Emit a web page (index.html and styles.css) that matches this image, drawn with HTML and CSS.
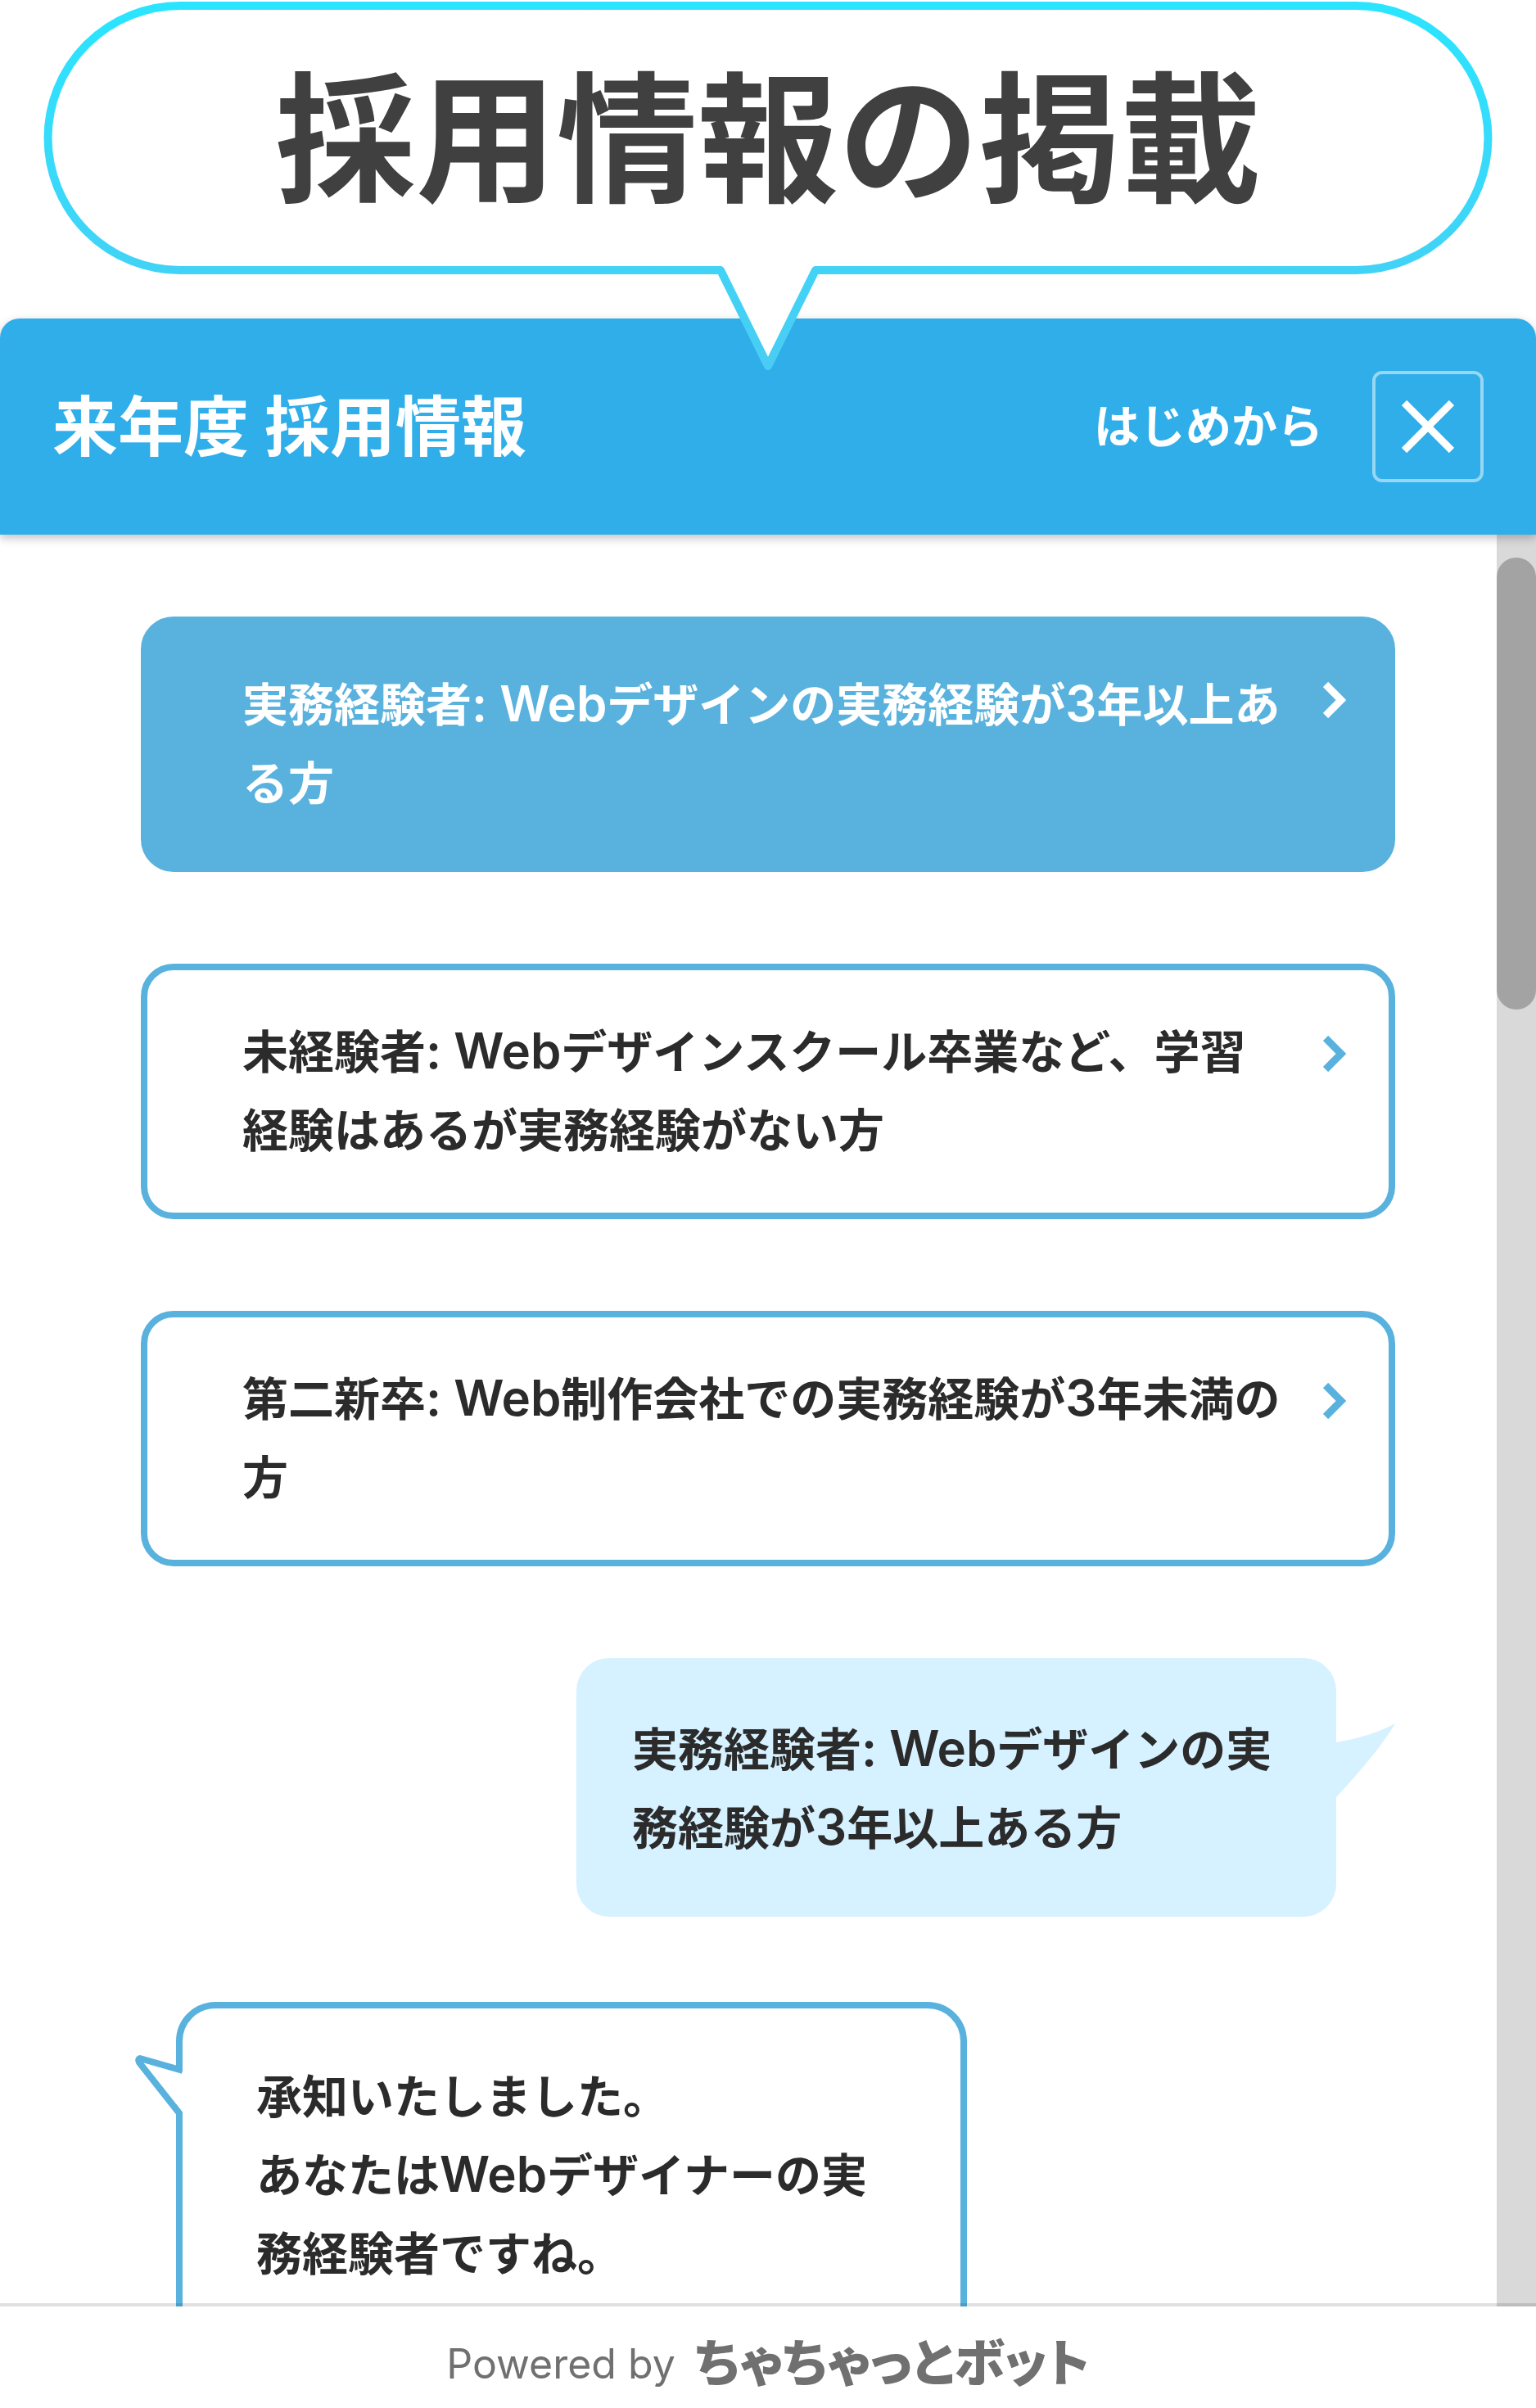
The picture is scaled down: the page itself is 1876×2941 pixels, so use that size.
FILE: index.html
```html
<!DOCTYPE html>
<html lang="ja">
<head>
<meta charset="utf-8">
<meta name="viewport" content="width=device-width, initial-scale=1">
<title>来年度 採用情報</title>
<link rel="stylesheet" href="styles.css">
</head>
<body>
<div class="page">
  <div class="callout">
    <svg class="callout-shape" viewBox="0 0 1876 456" aria-hidden="true">
      <defs>
        <linearGradient id="callout-stroke" gradientUnits="userSpaceOnUse" x1="0" y1="0" x2="0" y2="456">
          <stop offset="0" stop-color="#2ae5ff"/>
          <stop offset="1" stop-color="#4accf3"/>
        </linearGradient>
      </defs>
      <path d="M220 7H1656A161.500 161.500 0 0 1 1656 330H996L938 447L880 330H220A161.500 161.500 0 0 1 220 7Z" fill="#fff" stroke="url(#callout-stroke)" stroke-width="10" stroke-linejoin="round"/>
    </svg>
    <h1 class="callout-title">採用情報の掲載</h1>
  </div>

  <section class="chat">
    <header class="chat-header">
      <h2 class="chat-title">来年度 採用情報</h2>
      <button class="restart" type="button">はじめから</button>
      <button class="close" type="button" aria-label="閉じる">
        <svg viewBox="0 0 64 64" aria-hidden="true"><path d="M3 3L61 61M61 3L3 61"/></svg>
      </button>
    </header>

    <div class="chat-body">
      <div class="messages">
        <button class="choice choice-active" type="button">
          <span class="choice-text">実務経験者<span class="latin">: Web</span>デザインの実務経験が<span class="latin">3</span>年以上ある方</span>
          <svg class="chevron" viewBox="0 0 28 44" aria-hidden="true"><path d="M3 3L22 22L3 41"/></svg>
        </button>
        <button class="choice" type="button">
          <span class="choice-text">未経験者<span class="latin">: Web</span>デザインスクール卒業など、学習経験はあるが実務経験がない方</span>
          <svg class="chevron" viewBox="0 0 28 44" aria-hidden="true"><path d="M3 3L22 22L3 41"/></svg>
        </button>
        <button class="choice" type="button">
          <span class="choice-text">第二新卒<span class="latin">: Web</span>制作会社での実務経験が<span class="latin">3</span>年未満の方</span>
          <svg class="chevron" viewBox="0 0 28 44" aria-hidden="true"><path d="M3 3L22 22L3 41"/></svg>
        </button>

        <div class="bubble bubble-user">
          <p>実務経験者<span class="latin">: Web</span>デザインの実務経験が<span class="latin">3</span>年以上ある方</p>
          <svg class="tail tail-user" viewBox="0 0 72 90" aria-hidden="true"><path d="M0 23Q42 16 72 0Q52 34 0 90Z"/></svg>
        </div>

        <div class="bubble bubble-bot">
          <p>承知いたしました。<br>あなたは<span class="latin">Web</span>デザイナーの実務経験者ですね。</p>
          <svg class="tail tail-bot" viewBox="0 0 58 76" aria-hidden="true">
            <path class="tail-fill" d="M58 18L7 5L58 71Z"/>
            <path class="tail-line" d="M58 20L6 5Q3 6 5 10L54 72V76"/>
          </svg>
        </div>
      </div>
      <div class="scrollbar" aria-hidden="true"><div class="thumb"></div></div>
    </div>

    <footer class="chat-footer">
      <span class="powered">Powered by</span>
      <a class="brand" href="#">ちゃちゃっとボット</a>
    </footer>
  </section>
</div>
</body>
</html>
```

FILE: styles.css
```css
* {
  box-sizing: border-box;
}

body {
  margin: 0;
  background: #fff;
  color: #2b2b2b;
  font-family: Inter, "Noto Sans CJK JP", sans-serif;
  font-size: 56px;
  font-weight: 700;
  line-height: 96px;
}

h1,
h2,
p {
  margin: 0;
}

button {
  font: inherit;
  color: inherit;
  cursor: pointer;
}

.page {
  display: flex;
  flex-direction: column;
  height: 100vh;
}

/* Speech balloon above the chat window */
.callout {
  position: relative;
  z-index: 2;
  display: grid;
  flex: none;
  margin-bottom: -67px;
}

.callout-shape {
  grid-area: 1 / 1;
  display: block;
  width: 100%;
  height: auto;
}

.callout-title {
  grid-area: 1 / 1;
  color: #404040;
  font-size: 172px;
  font-weight: 700;
  line-height: 340px;
  text-align: center;
}

/* Chat window */
.chat {
  display: flex;
  flex: 1;
  flex-direction: column;
  min-height: 0;
}

.chat-header {
  position: relative;
  z-index: 1;
  display: flex;
  flex: none;
  align-items: center;
  gap: 60px;
  padding: 64px;
  border-radius: 24px 24px 0 0;
  background: #2faee9;
  box-shadow: 0 4px 12px rgba(0, 0, 0, 0.25);
  color: #fff;
}

.chat-title {
  flex: 1;
  font-size: 80px;
  font-weight: 700;
  line-height: 100px;
}

.restart {
  padding: 0;
  border: 0;
  background: none;
}

.close {
  display: grid;
  place-items: center;
  width: 136px;
  height: 136px;
  padding: 0;
  border: 4px solid rgba(255, 255, 255, 0.5);
  border-radius: 12px;
  background: none;
}

.close svg {
  width: 64px;
  height: 64px;
  fill: none;
  stroke: #fff;
  stroke-width: 9;
}

.chat-body {
  display: flex;
  flex: 1;
  min-height: 0;
  overflow: hidden;
}

.messages {
  display: flex;
  flex: 1;
  flex-direction: column;
  padding: 100px 124px 0 172px;
}

.latin {
  font-size: 60px;
  font-weight: 600;
  line-height: 1;
}

.choice {
  display: flex;
  flex: none;
  align-items: flex-start;
  justify-content: space-between;
  margin-bottom: 112px;
  padding: 52px 52px 52px 116px;
  border: 8px solid #59b2dd;
  border-radius: 40px;
  background: #fff;
  text-align: left;
}

.choice-text {
  flex: 1;
  margin-right: 44px;
}

.chevron {
  flex: none;
  width: 28px;
  height: 44px;
  margin-top: 28px;
  fill: none;
  stroke: #59b2dd;
  stroke-width: 9;
}

.choice-active {
  background: #59b2dd;
  color: #fff;
}

.choice-active .chevron {
  margin-top: 20px;
  stroke: #fff;
}

.bubble {
  position: relative;
  flex: none;
}

.bubble-user {
  align-self: flex-end;
  width: 928px;
  margin: 0 72px 104px 0;
  padding: 64px 68px 60px;
  border-radius: 40px;
  background: #d6f1ff;
}

.bubble-bot {
  align-self: flex-start;
  width: 966px;
  margin-left: 43px;
  padding: 60px 90px;
  border: 8px solid #59b2dd;
  border-radius: 48px;
}

.tail {
  position: absolute;
}

.tail-user {
  top: 80px;
  left: 100%;
  width: 72px;
  height: 90px;
  fill: #d6f1ff;
}

.tail-bot {
  top: 56px;
  left: -58px;
  width: 58px;
  height: 76px;
}

.tail-fill {
  fill: #fff;
}

.tail-line {
  fill: none;
  stroke: #59b2dd;
  stroke-width: 8;
  stroke-linejoin: round;
}

.scrollbar {
  flex: none;
  width: 48px;
  padding-top: 28px;
  background: #d9d9d9;
}

.thumb {
  height: 552px;
  border-radius: 24px;
  background: #a3a3a3;
}

.chat-footer {
  position: relative;
  display: flex;
  flex: none;
  align-items: center;
  justify-content: center;
  gap: 24px;
  height: 128px;
  margin-top: -4px;
  padding-top: 16px;
  border-top: 4px solid rgba(0, 0, 0, 0.12);
  background: #fff;
  background-clip: padding-box;
  color: #707070;
}

.powered {
  font-size: 50px;
  font-weight: 400;
}

.brand {
  color: inherit;
  font-size: 62px;
  font-weight: 900;
  font-feature-settings: "palt";
  text-decoration: none;
}
```
